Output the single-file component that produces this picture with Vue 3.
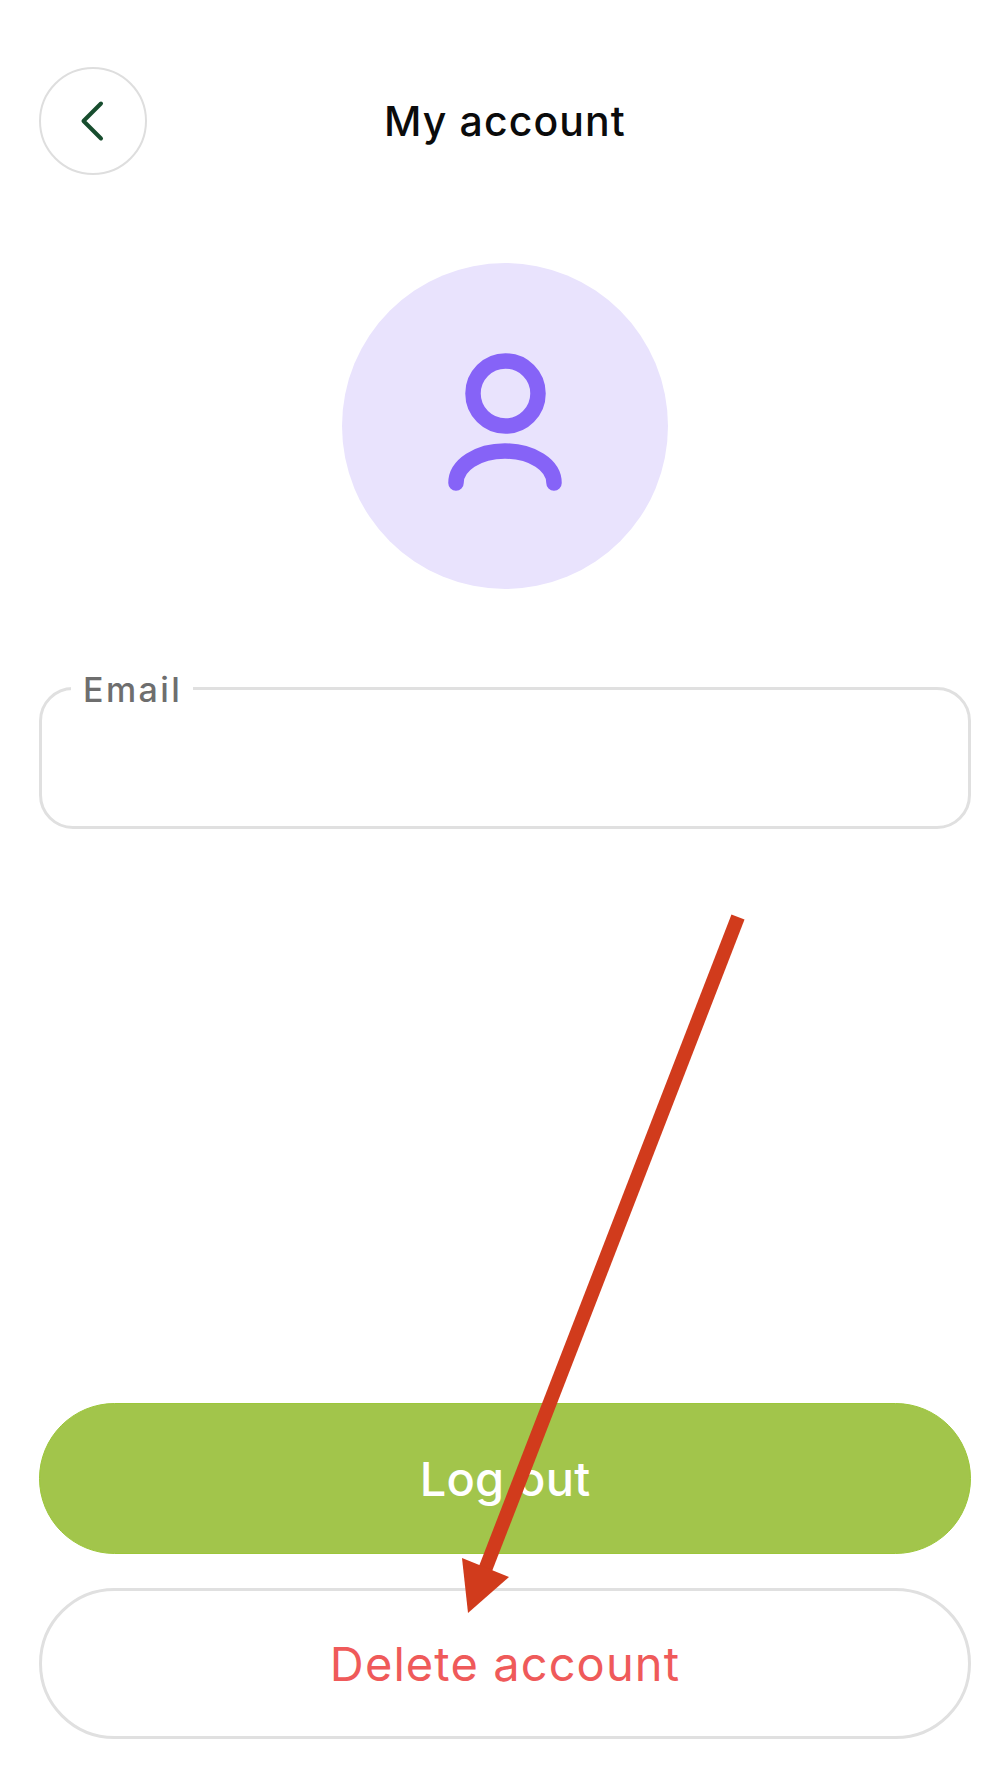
<script setup>
const title = 'My account'
</script>

<template>
  <main class="page">
    <header class="header">
      <button class="back" type="button" aria-label="Back">
        <svg width="40" height="56" viewBox="0 0 40 56" fill="none">
          <path d="M28 10.5 L10.5 28 L28 45.5" stroke="#174d2e" stroke-width="4" stroke-linecap="round" stroke-linejoin="round" />
        </svg>
      </button>
      <h1 class="title">{{ title }}</h1>
    </header>

    <div class="avatar">
      <svg width="130" height="150" viewBox="0 0 130 150" fill="none" stroke="#8663f7" stroke-width="15.5" stroke-linecap="round">
        <circle cx="65.5" cy="42.5" r="32.5" />
        <path d="M16 132 C16 114 38 100 65 100 C92 100 114 114 114 132" />
      </svg>
    </div>

    <div class="field">
      <span class="field-label">Email</span>
    </div>

    <div class="actions">
      <button class="btn btn-primary" type="button">Log out</button>
      <button class="btn btn-danger" type="button">Delete account</button>
    </div>

    <svg class="arrow" width="1008" height="1792" viewBox="0 0 1008 1792" fill="none">
      <line x1="738" y1="917" x2="485" y2="1570" stroke="#d13b1c" stroke-width="14" />
      <polygon points="468,1613 462,1558 509,1577" fill="#d13b1c" />
    </svg>
  </main>
</template>

<style>
html, body { background: #fff; }
</style>

<style scoped>
.page {
  position: relative;
  box-sizing: border-box;
  width: 1008px;
  height: 1792px;
  padding: 67px 37px 53px 39px;
  display: flex;
  flex-direction: column;
  background: #fff;
  font-family: Inter, "Noto Sans", sans-serif;
  overflow: hidden;
}
.header {
  position: relative;
  display: flex;
  align-items: center;
  justify-content: center;
  height: 108px;
}
.back {
  position: absolute;
  left: 0;
  top: 0;
  box-sizing: border-box;
  width: 108px;
  height: 108px;
  padding: 0;
  border: 2.5px solid #dedede;
  border-radius: 50%;
  background: #fff;
  display: flex;
  align-items: center;
  justify-content: center;
}
.title {
  margin: 0;
  font-size: 41px;
  font-weight: 500;
  color: #0b0b0b;
  letter-spacing: 1.1px;
}
.avatar {
  align-self: center;
  margin-top: 88px;
  width: 326px;
  height: 326px;
  border-radius: 50%;
  background: #e9e3fd;
  display: flex;
  align-items: center;
  justify-content: center;
}
.field {
  position: relative;
  box-sizing: border-box;
  margin-top: 98px;
  height: 142px;
  border: 3px solid #e0e0e0;
  border-radius: 34px;
}
.field-label {
  position: absolute;
  left: 29px;
  top: -20px;
  padding: 0 11px 0 12px;
  background: #fff;
  font-size: 34px;
  line-height: 40px;
  font-weight: 500;
  color: #6e6e6e;
  letter-spacing: 2.4px;
}
.actions {
  margin-top: auto;
  display: flex;
  flex-direction: column;
  gap: 34px;
}
.btn {
  box-sizing: border-box;
  width: 100%;
  height: 151px;
  border-radius: 76px;
  font-family: inherit;
  font-size: 47px;
  padding: 0;
}
.btn-primary {
  border: 1px solid #9cc63a;
  background: #a2c54b;
  color: #fff;
  font-weight: 500;
  letter-spacing: 0.2px;
}
.btn-danger {
  border: 3px solid #e0e0e0;
  background: #fff;
  color: #ef5a5a;
  font-weight: 400;
  letter-spacing: 1.1px;
}
.arrow {
  position: absolute;
  left: 0;
  top: 0;
  pointer-events: none;
}
</style>
